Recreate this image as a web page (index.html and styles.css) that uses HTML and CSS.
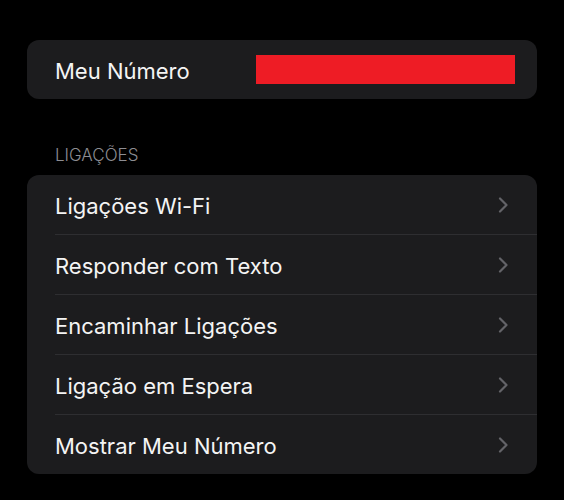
FILE: index.html
```html
<!DOCTYPE html>
<html lang="pt-BR">
  <head>
    <meta charset="UTF-8">
    <meta name="viewport" content="width=device-width, initial-scale=1.0">
    <title>Telefone</title>
    <link rel="stylesheet" href="styles.css">
  </head>
  <body>
    <div class="settings">
      <div class="group">
        <div class="row my-number">
          <span class="label">Meu Número</span>
          <span class="redacted"></span>
        </div>
      </div>

      <div class="section-header">LIGAÇÕES</div>
      <div class="group">
        <div class="row">
          <span class="label">Ligações Wi-Fi</span>
          <svg class="chevron" viewBox="0 0 10 16"><path d="M1.5 1.5 L8 8 L1.5 14.5"/></svg>
        </div>
        <div class="row">
          <span class="label">Responder com Texto</span>
          <svg class="chevron" viewBox="0 0 10 16"><path d="M1.5 1.5 L8 8 L1.5 14.5"/></svg>
        </div>
        <div class="row">
          <span class="label">Encaminhar Ligações</span>
          <svg class="chevron" viewBox="0 0 10 16"><path d="M1.5 1.5 L8 8 L1.5 14.5"/></svg>
        </div>
        <div class="row">
          <span class="label">Ligação em Espera</span>
          <svg class="chevron" viewBox="0 0 10 16"><path d="M1.5 1.5 L8 8 L1.5 14.5"/></svg>
        </div>
        <div class="row">
          <span class="label">Mostrar Meu Número</span>
          <svg class="chevron" viewBox="0 0 10 16"><path d="M1.5 1.5 L8 8 L1.5 14.5"/></svg>
        </div>
      </div>
    </div>
  </body>
</html>
```

FILE: styles.css
```css
:root {
  --bg-body: #000;
  --bg-group: #1c1c1e;
  --separator: #2e2e31;
  --text-primary: #f4f4f4;
  --text-secondary: #8d8d92;
  --chevron: #636368;
  --radius: 12px;
}

body {
  margin: 0;
  background: var(--bg-body);
  font-family: Inter, 'Noto Sans', sans-serif;
  color: var(--text-primary);
}

.settings {
  padding: 40px 27px;
}

.group {
  background: var(--bg-group);
  border-radius: var(--radius);
  overflow: hidden;
}

.row {
  display: flex;
  align-items: center;
  justify-content: space-between;
  height: 59px;
  margin-left: 28px;
  padding-right: 28px;
  border-top: 1px solid var(--separator);
}

.row:first-child {
  border-top: none;
}

.label {
  font-size: 22px;
  padding-top: 2px;
}

.my-number {
  padding-right: 22px;
}

.redacted {
  width: 259px;
  height: 29px;
  background: #ee1c25;
}

.section-header {
  padding: 46px 28px 10px;
  font-size: 17px;
  font-weight: 300;
  line-height: 20px;
  color: var(--text-secondary);
}

.chevron {
  width: 11px;
  height: 16px;
  fill: none;
  stroke: var(--chevron);
  stroke-width: 2.2;
  stroke-linecap: round;
  stroke-linejoin: round;
}
```
